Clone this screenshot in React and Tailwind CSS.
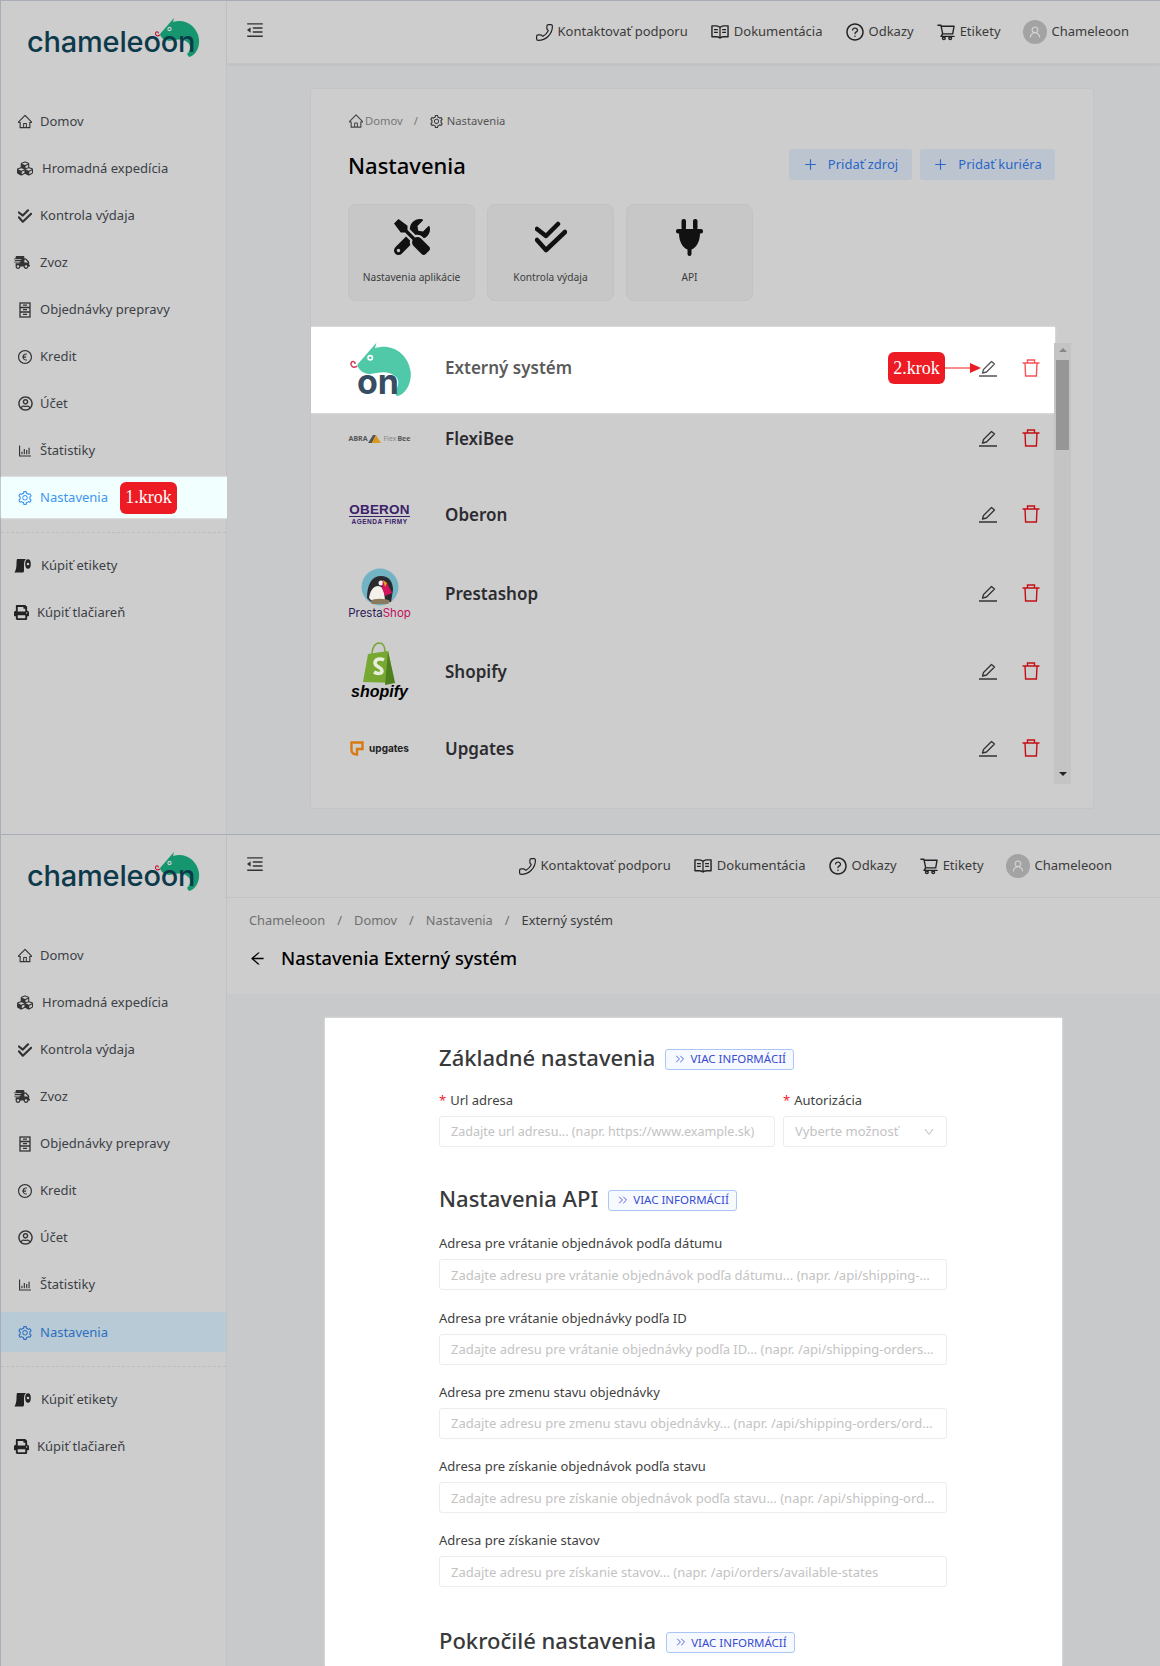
import { useState } from 'react';
import {
    AiOutlineHome, AiOutlineSetting, AiOutlineQuestionCircle, AiOutlineShoppingCart,
    AiOutlineEuroCircle, AiOutlineBarChart, AiOutlineRead, AiOutlineMenuFold, AiOutlineUser, AiOutlinePlus,
    AiOutlineArrowLeft, AiOutlineDown,
} from 'react-icons/ai';
import { FaCubes, FaShippingFast, FaPrint, FaTools, FaRegUserCircle } from 'react-icons/fa';
import { Phone, ChevronsRight } from 'lucide-react';

const font = "font-['Noto_Sans',sans-serif]";

// double tick used by the "Kontrola výdaja" entries
function DoubleCheck({ size = 14 }) {
    return (
        <svg width={size} height={size} viewBox="0 0 32 32" fill="none" stroke="currentColor" strokeWidth={size > 20 ? 4.5 : 5} strokeLinecap="round" strokeLinejoin="round">
            <path d="M2 8l9 7L23 3" />
            <path d="M2 19l9 10L30 11" />
        </svg>
    );
}

function PlugIcon() {
    return (
        <svg width="27" height="37" viewBox="0 0 27 37" fill="currentColor">
            <rect x="5.500" y="0" width="4.500" height="11" rx="2" />
            <rect x="17" y="0" width="4.500" height="11" rx="2" />
            <rect x="0" y="10" width="27" height="4.500" rx="2" />
            <path d="M3 14h21c0 9-4 15-8.500 16.500V35a2 2 0 0 1-4 0v-4.500C7 29 3 23 3 14z" />
        </svg>
    );
}

function EditIcon() {
    return (
        <svg width="18" height="18" viewBox="0 0 18 18" fill="none" stroke="currentColor">
            <path d="M3.500 14 L4.500 10.500 L12.500 2.500 L15.500 5 L7.500 13 Z" strokeWidth="1.300" strokeLinejoin="round" />
            <path d="M0 17h18" strokeWidth="1.500" />
        </svg>
    );
}

function OrdersIcon() {
    return (
        <svg width="16" height="16" viewBox="0 0 16 16" fill="none" stroke="currentColor" strokeWidth="1.300">
            <rect x="3" y="1" width="10" height="14" />
            <path d="M3 5.500h10M3 10h10M6 3.200h4M6 7.700h4M6 12.400h4" />
        </svg>
    );
}

function LabelRollIcon() {
    return (
        <svg width="17" height="15" viewBox="0 0 17 15" fill="currentColor">
            <path d="M3 1h9c-1.500 1-2 3-2 6v6c0 .8-.6 1.500-1.500 1.500H0.500C2 12 2.500 9 2.500 6 2.500 4 2.600 2 3 1z" />
            <ellipse cx="14" cy="6" rx="2.800" ry="4.800" />
            <circle cx="14" cy="6" r="1.300" fill="#cdcdcd" />
        </svg>
    );
}

function TrashIcon({ className }) {
    return (
        <svg width="18" height="18" viewBox="0 0 18 18" fill="none" stroke="currentColor" strokeWidth="1.400" className={className}>
            <path d="M0.500 4h17M3 4l.6 13h10.800L15 4M5.500 4V1h7v3" />
        </svg>
    );
}

// chameleon drawn behind the wordmark
function Chameleon({ className, color = '#15966e', tongue = '#c8102e', eye = '#cdcdcd' }) {
    return (
        <svg viewBox="0 0 46 42" className={className}>
            <path d="M6 18 L13 10 L20 2 L19 6 C30 2 43 9 45 23 C46 32 41 40 35 41 L33 38 C37 34 37 28 33 26 C28 22 21 24 15 25 C10 24 7 22 6 18 Z" fill={color} />
            <circle cx="15.500" cy="13" r="2.200" fill={eye} />
            <circle cx="15.500" cy="13" r="1" fill={color} />
            <path d="M6 19 C3 21 1 19 1.500 17 C2 15 4.500 15.500 4.500 17.500" fill="none" stroke={tongue} strokeWidth="1.100" />
        </svg>
    );
}

function Logo() {
    return (
        <div className="relative h-[63px] w-full">
            <Chameleon className="absolute left-[153px] top-[15px] w-[46px]" />
            <span className="absolute left-[26px] top-[19px] text-[29px] leading-[44px] font-medium text-[#0d3a4b] font-['Inter',sans-serif] tracking-[-0.2px]">chameleoon</span>
        </div>
    );
}

const menu = [
    { label: 'Domov', icon: <AiOutlineHome size={17} />, iconX: 'ml-[16px]', textX: 'ml-[7px]' },
    { label: 'Hromadná expedícia', icon: <FaCubes size={17} />, iconX: 'ml-[16px]', textX: 'ml-[9px]' },
    { label: 'Kontrola výdaja', icon: <DoubleCheck />, iconX: 'ml-[16px]', textX: 'ml-[7px]' },
    { label: 'Zvoz', icon: <FaShippingFast size={17} />, iconX: 'ml-[13px]', textX: 'ml-[10px]' },
    { label: 'Objednávky prepravy', icon: <OrdersIcon />, iconX: 'ml-[16px]', textX: 'ml-[7px]' },
    { label: 'Kredit', icon: <AiOutlineEuroCircle size={16} />, iconX: 'ml-[16px]', textX: 'ml-[7px]' },
    { label: 'Účet', icon: <FaRegUserCircle size={15} />, iconX: 'ml-[16px]', textX: 'ml-[7px]' },
    { label: 'Štatistiky', icon: <AiOutlineBarChart size={16} />, iconX: 'ml-[16px]', textX: 'ml-[7px]' },
];

function NavRow({ item }) {
    return (
        <div className="flex h-[47px] items-center text-[#3b3f46]">
            <span className={`${item.iconX} flex w-[16px] shrink-0 justify-center text-[#333]`}>{item.icon}</span>
            <span className={item.textX}>{item.label}</span>
        </div>
    );
}

function Sidebar({ step }) {
    return (
        <aside className="flex w-[226px] shrink-0 flex-col border-r border-[#c2c3c4] bg-[#cdcdcd] text-[13px]">
            <Logo />
            <nav className="mt-[34px]">
                {menu.map(item => <NavRow key={item.label} item={item} />)}
                {step ? (
                    <div className="mt-[3px] mb-[14px] flex h-[41px] w-[227px] items-center bg-[#f1ffff] text-[#3f94f0] shadow-[0_0_2px_#fff]">
                        <AiOutlineSetting size={16} className="ml-[16px] shrink-0" />
                        <span className="ml-[7px]">Nastavenia</span>
                        <span className="ml-[12px] flex h-[32px] w-[57px] items-center justify-center rounded-md bg-[#ed1c24] font-['Liberation_Serif',serif] text-[18px] text-white">1.krok</span>
                    </div>
                ) : (
                    <div className="mt-[4px] mb-[14px] flex h-[40px] items-center bg-[#b7cad5] pt-[1px] text-[#2c6fc0]">
                        <AiOutlineSetting size={16} className="ml-[16px] shrink-0" />
                        <span className="ml-[7px]">Nastavenia</span>
                    </div>
                )}
                <div className="border-t border-dashed border-[#bdbdbd]" />
                <div className="mt-[9px] flex h-[47px] items-center text-[#3b3f46]">
                    <span className="ml-[13px] flex w-[17px] justify-center text-[#222]"><LabelRollIcon /></span>
                    <span className="ml-[10px]">Kúpiť etikety</span>
                </div>
                <div className="flex h-[47px] items-center text-[#3b3f46]">
                    <span className="ml-[12px] flex w-[16px] justify-center text-[#222]"><FaPrint size={15} /></span>
                    <span className="ml-[8px]">Kúpiť tlačiareň</span>
                </div>
            </nav>
        </aside>
    );
}

function TopItem({ icon, label }) {
    return (
        <div className="flex items-center gap-[4px]">
            {icon}
            <span>{label}</span>
        </div>
    );
}

function Header({ padRight }) {
    return (
        <header className={`flex h-[63px] shrink-0 items-center justify-between border-b border-[#c3c4c5] bg-[#cdcdcd] pl-[18px] text-[13px] text-[#3b3b3b] shadow-[0_1px_3px_rgba(0,0,0,0.06)] ${padRight}`}>
            <AiOutlineMenuFold size={20} className="mb-[4px] text-[#333]" />
            <div className="flex items-center gap-[22px]">
                <TopItem icon={<Phone size={19} strokeWidth={1.500} className="-scale-x-100 text-[#222]" />} label="Kontaktovať podporu" />
                <TopItem icon={<AiOutlineRead size={20} className="text-[#222]" />} label="Dokumentácia" />
                <TopItem icon={<AiOutlineQuestionCircle size={20} className="text-[#222]" />} label="Odkazy" />
                <TopItem icon={<AiOutlineShoppingCart size={20} className="text-[#222]" />} label="Etikety" />
                <div className="flex items-center gap-[5px]">
                    <span className="flex h-[24px] w-[24px] items-center justify-center rounded-full bg-[#a3a3a3] text-[#d8d8d8]"><AiOutlineUser size={14} /></span>
                    <span>Chameleoon</span>
                </div>
            </div>
        </header>
    );
}

function Tile({ icon, label }) {
    return (
        <div className="flex h-[97px] w-[127px] flex-col items-center rounded-lg border border-[#c2c2c2] bg-[#c7c7c7] pt-[14px] text-[10.200px] text-[#3c3c3c]">
            <div className="flex h-[36px] items-center justify-center text-[#111]">{icon}</div>
            <span className="mt-[15px]">{label}</span>
        </div>
    );
}

function AddButton({ label, width }) {
    return (
        <button className={`flex h-[31px] items-center justify-center gap-[10px] rounded-[3px] bg-[#bcc5cf] text-[13px] text-[#2a66c8] ${width}`}>
            <AiOutlinePlus size={15} />
            {label}
        </button>
    );
}

function FlexiBeeLogo() {
    return (
        <div className="flex items-center text-[7px] leading-none font-bold text-[#555]">
            <span>ABRA</span>
            <svg width="14" height="9" viewBox="0 0 14 9" className="mx-[1px]">
                <path d="M0 9L5 1h3L4 9z" fill="#555" />
                <path d="M4 9l4-8 5 8z" fill="#d99a1c" />
            </svg>
            <span className="font-normal text-[#888]">Flex</span>
            <span className="ml-[1px]">Bee</span>
        </div>
    );
}

function OberonLogo() {
    return (
        <div className="flex w-[61px] flex-col items-center font-['Liberation_Sans',sans-serif] font-bold text-[#3b2169]">
            <span className="text-[13.500px] leading-[11px] tracking-[0.2px]">OBERON</span>
            <span className="my-[1px] h-px w-full bg-[#3b2169]" />
            <span className="text-[6.500px] leading-[7px] tracking-[0.5px]">AGENDA FIRMY</span>
        </div>
    );
}

function PrestashopLogo() {
    return (
        <div className="flex flex-col items-center">
            <svg width="38" height="38" viewBox="0 0 38 38">
                <circle cx="19" cy="19" r="18.500" fill="#73b4c4" />
                <path d="M6 30c0-14 5-22 14-22 8 0 12 6 12 14l-2 12H10z" fill="#2a2a2e" />
                <path d="M8 30c1-7 4-12 9-12 3 0 5 2 6 6l1 8H10z" fill="#f4f1ea" />
                <circle cx="20" cy="15" r="2.500" fill="#f4f1ea" />
                <path d="M22 12l4 3 5 10-7 3-3-8z" fill="#d5125e" />
                <path d="M22 12l4 3-2 4z" fill="#e6a11c" />
                <path d="M9 33c4-3 16-3 20 0l-2 3H11z" fill="#8a7a5e" />
            </svg>
            <span className="mt-[1px] font-['Inter',sans-serif] text-[11.500px] leading-[12px] text-[#2d1b55]">Presta<span className="text-[#c1105c]">Shop</span></span>
        </div>
    );
}

function ShopifyLogo() {
    return (
        <div className="flex flex-col items-center">
            <svg width="38" height="44" viewBox="0 0 38 44">
                <path d="M3 40L8 12l20-3 7 32z" fill="#77a832" />
                <path d="M28 9l7 32-10 2z" fill="#4f7f1e" />
                <path d="M12 12c0-6 3-11 7-11s6 4 6 9" fill="none" stroke="#77a832" strokeWidth="1.500" />
                <path d="M24 18c-4-2-9-1-9 3 0 4 7 4 7 8 0 3-5 3-8 1" fill="none" stroke="#e8eedb" strokeWidth="3.500" />
            </svg>
            <span className="-mt-[2px] font-['Liberation_Sans',sans-serif] text-[16px] leading-[16px] font-bold italic text-black">shopify</span>
        </div>
    );
}

function UpgatesLogo() {
    return (
        <div className="flex items-center gap-[5px]">
            <svg width="14" height="15" viewBox="0 0 14 15" fill="none" stroke="#d9780f" strokeWidth="2.400">
                <path d="M1.500 9V1.500h11v6.500H7V13.500C4 13.500 1.500 12 1.500 9z" />
            </svg>
            <span className="font-['Inter',sans-serif] text-[10px] leading-none font-bold text-[#222]">upgates</span>
        </div>
    );
}

const sources = [
    { name: 'FlexiBee', logo: <FlexiBeeLogo />, row: 'h-[50px] mb-[12px]' },
    { name: 'Oberon', logo: <OberonLogo />, row: 'h-[78px] mb-[1px]' },
    { name: 'Prestashop', logo: <PrestashopLogo />, row: 'h-[78px]' },
    { name: 'Shopify', logo: <ShopifyLogo />, row: 'h-[78px] mb-[2px]' },
    { name: 'Upgates', logo: <UpgatesLogo />, row: 'h-[72px]' },
];

function SourceActions({ light }) {
    return (
        <div className="flex items-center">
            <span className={light ? 'text-[#555]' : 'text-[#333]'}><EditIcon /></span>
            <TrashIcon className={`ml-[25px] mr-[14px] ${light ? 'text-[#f8525a]' : 'text-[#c40e14]'}`} />
        </div>
    );
}

function ExternalRow() {
    return (
        <div className="relative -ml-[37px] flex h-[86px] w-[744px] items-center justify-between bg-white pb-[4px] pl-[37px] pr-[1px] shadow-[0_0_2px_#eee]">
            <div className="flex items-center">
                <div className="relative ml-[1px] h-[52px] w-[64px]">
                    <Chameleon className="absolute left-0 -top-[2px] w-[63px]" color="#4fc9a8" tongue="#d23a5a" eye="#fff" />
                    <span className="absolute left-[8px] top-[20px] font-['Inter',sans-serif] text-[34px] leading-[40px] font-bold text-[#384d63]">on</span>
                </div>
                <span className="ml-[32px] text-[17px] font-semibold text-[#5b5b5b]">Externý systém</span>
            </div>
            <div className="flex items-center">
                <span className="flex h-[32px] w-[57px] items-center justify-center rounded-md bg-[#ed1c24] font-['Liberation_Serif',serif] text-[18px] text-white">2.krok</span>
                <svg width="36" height="12" viewBox="0 0 36 12" className="-mr-[2px]">
                    <path d="M0 6h26" stroke="#ed1c24" strokeWidth="1" />
                    <path d="M25 1l11 5-11 5z" fill="#ed1c24" />
                </svg>
                <SourceActions light />
            </div>
        </div>
    );
}

function SettingsScreen() {
    return (
        <section className="flex h-[834px] shrink-0 border-t border-l border-[#a9adb8]">
            <Sidebar step />
            <div className="flex min-w-0 flex-1 flex-col bg-[#c8c9cb]">
                <Header padRight="pr-[31px]" />
                <div className="ml-[83px] mt-[24px] flex h-[721px] w-[784px] flex-col overflow-hidden rounded-[3px] border border-[#c3c4c7] bg-[#cdcdcd] pl-[37px]">
                    <div className="mt-[24px] flex h-[16px] items-center text-[11.200px] text-[#555]">
                        <AiOutlineHome size={16} className="text-[#444]" />
                        <span className="ml-[1px] text-[#777]">Domov</span>
                        <span className="mx-[11px] text-[#777]">/</span>
                        <AiOutlineSetting size={15} className="text-[#333]" />
                        <span className="ml-[3px]">Nastavenia</span>
                    </div>
                    <div className="mt-[20px] flex h-[33px] items-start justify-between pr-[38px]">
                        <h1 className="text-[22px] leading-[32px] font-medium text-black">Nastavenia</h1>
                        <div className="flex gap-[8px]">
                            <AddButton label="Pridať zdroj" width="w-[123px]" />
                            <AddButton label="Pridať kuriéra" width="w-[135px]" />
                        </div>
                    </div>
                    <div className="mt-[22px] flex gap-[12px]">
                        <Tile icon={<FaTools size={36} />} label="Nastavenia aplikácie" />
                        <Tile icon={<DoubleCheck size={32} />} label="Kontrola výdaja" />
                        <Tile icon={<PlugIcon />} label="API" />
                    </div>
                    <div className="mt-[26px] flex">
                        <div className="w-[706px]">
                            <ExternalRow />
                            {sources.map(s => (
                                <div key={s.name} className={`flex items-center justify-between ${s.row}`}>
                                    <div className="flex items-center">
                                        <div className="ml-[1px] flex w-[61px] justify-center">{s.logo}</div>
                                        <span className="ml-[35px] mt-[1px] text-[17px] font-semibold text-[#2c2c30]">{s.name}</span>
                                    </div>
                                    <SourceActions />
                                </div>
                            ))}
                        </div>
                        {/* list scrollbar */}
                        <div className="relative mt-[16px] h-[441px] w-[17px] bg-[#c4c4c4]">
                            <span className="absolute left-[5px] top-[5px] h-0 w-0 border-x-[4px] border-b-[4px] border-x-transparent border-b-[#888]" />
                            <span className="absolute left-[2px] top-[17px] h-[90px] w-[13px] bg-[#969696]" />
                            <span className="absolute bottom-[8px] left-[5px] h-0 w-0 border-x-[4px] border-t-[4px] border-x-transparent border-t-[#222]" />
                        </div>
                    </div>
                </div>
            </div>
        </section>
    );
}

function Chip() {
    return (
        <span className="ml-[10px] flex h-[21px] items-center gap-[3px] rounded-[3px] border border-[#a9c6f7] bg-[#f6faff] px-[7px] text-[11.500px] text-[#3a4bd0]">
            <ChevronsRight size={14} strokeWidth={1.500} />
            VIAC INFORMÁCIÍ
        </span>
    );
}

function SectionTitle({ children }) {
    return (
        <div className="flex h-[32px] items-center">
            <h2 className="mb-[3px] text-[22px] leading-[29px] font-medium text-[#38393b]">{children}</h2>
            <Chip />
        </div>
    );
}

const inputClass = 'h-[31px] w-full truncate rounded-[3px] border border-[#ececec] bg-white px-[11px] outline-none placeholder:text-[#c3c3c3]';
const labelClass = 'block h-[20px] text-[13px] leading-[18px] text-[#3f3f3f]';

function Field({ label, placeholder }) {
    const [value, setValue] = useState('');
    return (
        <div className="mt-[18.250px]">
            <label className={labelClass}>{label}</label>
            <input className={`${inputClass} mt-[5px] text-[13px]`} placeholder={placeholder} value={value} onChange={e => setValue(e.target.value)} />
        </div>
    );
}

const apiFields = [
    ['Adresa pre vrátanie objednávok podľa dátumu', 'Zadajte adresu pre vrátanie objednávok podľa dátumu... (napr. /api/shipping-orders/by-date)'],
    ['Adresa pre vrátanie objednávky podľa ID', 'Zadajte adresu pre vrátanie objednávky podľa ID... (napr. /api/shipping-orders/by-id/{id})'],
    ['Adresa pre zmenu stavu objednávky', 'Zadajte adresu pre zmenu stavu objednávky... (napr. /api/shipping-orders/order-state)'],
    ['Adresa pre získanie objednávok podľa stavu', 'Zadajte adresu pre získanie objednávok podľa stavu... (napr. /api/shipping-orders/by-state)'],
    ['Adresa pre získanie stavov', 'Zadajte adresu pre získanie stavov... (napr. /api/orders/available-states'],
];

function DetailScreen() {
    return (
        <section className="flex h-[832px] shrink-0 overflow-hidden border-t border-l border-[#a9adb8]">
            <Sidebar />
            <div className="flex min-w-0 flex-1 flex-col bg-[#c8c9cb]">
                <Header padRight="pr-[48px]" />
                <div className="h-[96px] shrink-0 bg-[#cdcdcd] pl-[22px]">
                    <div className="mt-[13px] flex h-[20px] items-center text-[12.800px] text-[#6f6f6f]">
                        <span>Chameleoon</span>
                        <span className="mx-[12px]">/</span>
                        <span>Domov</span>
                        <span className="mx-[12px]">/</span>
                        <span>Nastavenia</span>
                        <span className="mx-[12px]">/</span>
                        <span className="text-[#3c3c3c]">Externý systém</span>
                    </div>
                    <div className="mt-[13px] flex items-center text-black">
                        <AiOutlineArrowLeft size={17} />
                        <h1 className="ml-[15px] text-[18.300px] leading-[28px] font-medium">Nastavenia Externý systém</h1>
                    </div>
                </div>
                <div className="ml-[98px] mt-[24px] w-[737px] flex-1 bg-white pl-[114px] pt-[25px] shadow-[0_0_2px_#eee]">
                    <div className="w-[508px]">
                        <SectionTitle>Základné nastavenia</SectionTitle>
                        <div className="mt-[16px] flex gap-[8px]">
                            <div className="w-[336px]">
                                <label className={labelClass}><span className="mr-[4px] text-[#f5222d]">*</span>Url adresa</label>
                                <input className={`${inputClass} mt-[5px] text-[12.600px]`} placeholder="Zadajte url adresu... (napr. https://www.example.sk)" />
                            </div>
                            <div className="w-[164px]">
                                <label className={labelClass}><span className="mr-[4px] text-[#f5222d]">*</span>Autorizácia</label>
                                <div className="mt-[5px] flex h-[31px] items-center justify-between rounded-[3px] border border-[#ececec] px-[11px] text-[13px] text-[#c3c3c3]">
                                    Vyberte možnosť
                                    <AiOutlineDown size={12} />
                                </div>
                            </div>
                        </div>
                        <div className="mt-[37px]">
                            <SectionTitle>Nastavenia API</SectionTitle>
                        </div>
                        <div className="mt-[6px]">
                            {apiFields.map(([label, placeholder]) => <Field key={label} label={label} placeholder={placeholder} />)}
                        </div>
                        <div className="mt-[39px]">
                            <SectionTitle>Pokročilé nastavenia</SectionTitle>
                        </div>
                    </div>
                </div>
            </div>
        </section>
    );
}

export default function App() {
    return (
        <div className={`flex h-[1666px] w-[1160px] flex-col overflow-hidden bg-[#c8c9cb] ${font}`}>
            <SettingsScreen />
            <DetailScreen />
        </div>
    );
}
